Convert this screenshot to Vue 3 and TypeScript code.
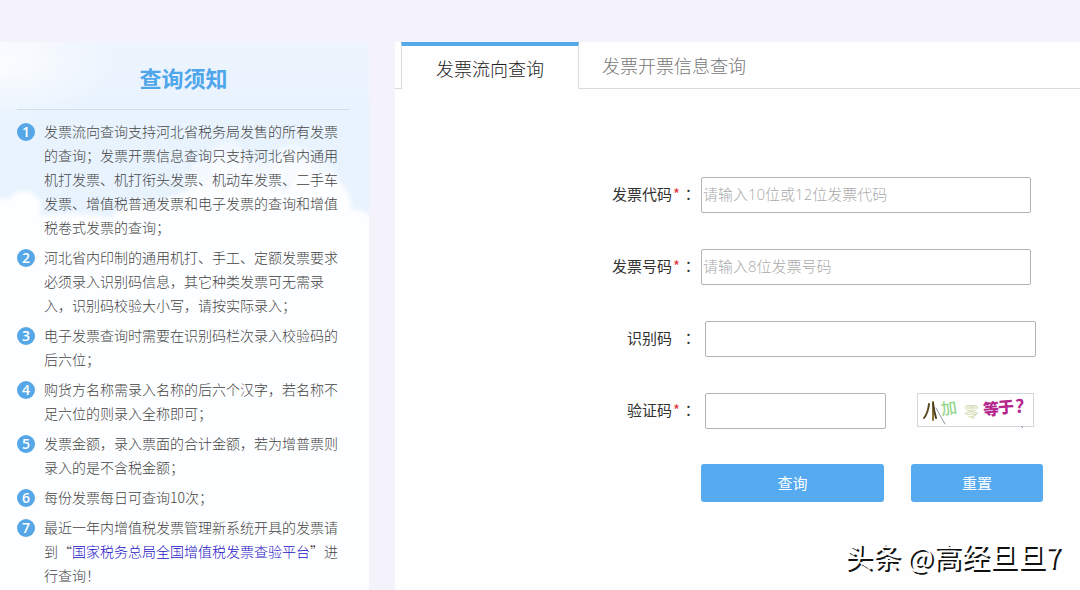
<script setup lang="ts">
import { ref } from 'vue'

interface Notice {
  before: string
  link?: string
  after?: string
}

const notices: Notice[] = [
  { before: '发票流向查询支持河北省税务局发售的所有发票的查询；发票开票信息查询只支持河北省内通用机打发票、机打衔头发票、机动车发票、二手车发票、增值税普通发票和电子发票的查询和增值税卷式发票的查询；' },
  { before: '河北省内印制的通用机打、手工、定额发票要求必须录入识别码信息，其它种类发票可无需录入，识别码校验大小写，请按实际录入；' },
  { before: '电子发票查询时需要在识别码栏次录入校验码的后六位；' },
  { before: '购货方名称需录入名称的后六个汉字，若名称不足六位的则录入全称即可；' },
  { before: '发票金额，录入票面的合计金额，若为增普票则录入的是不含税金额；' },
  { before: '每份发票每日可查询10次；' },
  { before: '最近一年内增值税发票管理新系统开具的发票请到“', link: '国家税务总局全国增值税发票查验平台', after: '”进行查询！' },
]

const tabs = ['发票流向查询', '发票开票信息查询']
const activeTab = ref(0)

const code = ref('')
const number = ref('')
const mark = ref('')
const captcha = ref('')

function reset() {
  code.value = ''
  number.value = ''
  mark.value = ''
  captcha.value = ''
}
</script>

<template>
  <div class="page">
    <aside class="notice">
      <svg class="clouds" viewBox="0 0 369 548" preserveAspectRatio="none" aria-hidden="true">
        <defs>
          <linearGradient id="sky" x1="0" y1="0" x2="0" y2="1">
            <stop offset="0" stop-color="#edf4fe" />
            <stop offset="0.15" stop-color="#e8f3fe" />
            <stop offset="1" stop-color="#e8f2fe" />
          </linearGradient>
          <linearGradient id="haze" x1="0" y1="0" x2="0" y2="1">
            <stop offset="0" stop-color="#fff" stop-opacity="0.35" />
            <stop offset="0.6" stop-color="#fff" stop-opacity="0.7" />
          </linearGradient>
          <radialGradient id="glow">
            <stop offset="0" stop-color="#fff" stop-opacity="0.8" />
            <stop offset="1" stop-color="#fff" stop-opacity="0" />
          </radialGradient>
          <filter id="soft"><feGaussianBlur stdDeviation="2" /></filter>
        </defs>
        <rect width="369" height="548" fill="url(#sky)" />
        <ellipse cx="0" cy="20" rx="120" ry="60" fill="url(#glow)" />
        <g fill="url(#haze)" filter="url(#soft)">
          <circle cx="228" cy="118" r="18" />
          <circle cx="208" cy="140" r="22" />
          <circle cx="256" cy="146" r="28" />
          <circle cx="292" cy="122" r="20" />
          <circle cx="316" cy="140" r="22" />
        </g>
        <g fill="#fdfeff" filter="url(#soft)">
          <circle cx="24" cy="166" r="17" />
          <ellipse cx="2" cy="172" rx="20" ry="16" />
          <ellipse cx="152" cy="186" rx="44" ry="28" />
          <ellipse cx="230" cy="178" rx="80" ry="34" />
          <circle cx="316" cy="168" r="36" />
          <circle cx="356" cy="186" r="18" />
          <ellipse cx="70" cy="196" rx="70" ry="24" />
          <rect x="-10" y="178" width="390" height="390" />
        </g>
      </svg>
      <div class="notice-body">
        <h2>查询须知</h2>
        <ol>
          <li v-for="(item, i) in notices" :key="i">
            <span class="num">{{ i + 1 }}</span>
            <p>{{ item.before }}<a v-if="item.link" href="#">{{ item.link }}</a>{{ item.after }}</p>
          </li>
        </ol>
      </div>
    </aside>

    <main class="panel">
      <nav class="tabs" role="tablist">
        <button
          v-for="(tab, i) in tabs"
          :key="tab"
          type="button"
          role="tab"
          class="tab"
          :class="{ active: activeTab === i }"
          :aria-selected="activeTab === i"
          @click="activeTab = i"
        >{{ tab }}</button>
      </nav>

      <form @submit.prevent @reset.prevent="reset">
        <div class="row short">
          <label for="code">发票代码<span class="star">*</span><span class="colon">：</span></label>
          <input id="code" v-model="code" type="text" placeholder="请输入10位或12位发票代码" />
        </div>
        <div class="row short">
          <label for="number">发票号码<span class="star">*</span><span class="colon">：</span></label>
          <input id="number" v-model="number" type="text" placeholder="请输入8位发票号码" />
        </div>
        <div class="row">
          <label for="mark">识别码<span class="star"></span><span class="colon">：</span></label>
          <input id="mark" v-model="mark" type="text" />
        </div>
        <div class="row">
          <label for="captcha">验证码<span class="star">*</span><span class="colon">：</span></label>
          <input id="captcha" v-model="captcha" type="text" />
          <svg class="captcha" viewBox="0 0 117 34" role="img" aria-label="验证码图片">
            <rect x="0.5" y="0.5" width="116" height="33" fill="#fff" stroke="#d3d7da" />
            <g fill="none" stroke-linecap="round">
              <path d="M12 11 Q11 20 7 25" stroke="#5a4a20" stroke-width="2" />
              <path d="M16 9 L16 27" stroke="#8a7434" stroke-width="2" />
              <path d="M16 10 Q17 18 19 25" stroke="#4c3d1c" stroke-width="2" />
              <path d="M19 15 L28 31" stroke="#8d93a8" stroke-width="1" />
            </g>
            <text x="24" y="21" font-size="16" font-weight="500" fill="#93d68d" transform="rotate(-8 31 16)">加</text>
            <text x="47" y="24" font-size="15" font-weight="500" fill="#dcdfbd">零</text>
            <text x="66" y="22" font-size="16" font-weight="900" fill="#b5278d" transform="rotate(-4 74 16)">等</text>
            <text x="81" y="20" font-size="16" font-weight="900" fill="#b5278d" transform="rotate(-4 89 14)">于</text>
            <text x="98" y="20" font-size="18" font-weight="700" fill="#b5278d">?</text>
            <path d="M104 33 l2 2" stroke="#b583b5" />
          </svg>
        </div>
        <div class="actions">
          <button type="submit" class="query">查询</button>
          <button type="reset" class="reset">重置</button>
        </div>
      </form>
    </main>

    <div class="watermark">头条 @高经旦旦7</div>
  </div>
</template>

<style>
body {
  margin: 0;
  background: #f4f3fb;
}
</style>

<style scoped>
.page {
  position: relative;
  display: flex;
  gap: 26px;
  box-sizing: border-box;
  height: 100vh;
  padding-top: 42px;
  overflow: hidden;
  font-family: "Noto Sans CJK SC", sans-serif;
  font-weight: 300;
  color: #333;
}
.notice {
  position: relative;
  flex: 0 0 369px;
  border-radius: 0 8px 0 0;
  overflow: hidden;
}
.clouds {
  position: absolute;
  inset: 0;
  width: 100%;
  height: 100%;
}
.notice-body {
  position: relative;
  padding: 19px 19px 0 17px;
}
h2 {
  margin: 0 0 9px;
  padding-bottom: 16px;
  border-bottom: 1px solid #cfdcec;
  font-size: 22px;
  line-height: 32px;
  font-weight: 700;
  text-align: center;
  color: #4fa6ea;
}
ol {
  display: flex;
  flex-direction: column;
  gap: 6px;
  margin: 0;
  padding: 0;
  list-style: none;
}
li {
  display: flex;
  align-items: flex-start;
  gap: 9px;
}
.num {
  flex: none;
  width: 18px;
  height: 18px;
  margin-top: 4px;
  border-radius: 50%;
  background: #55a7e8;
  color: #fff;
  font-family: "Open Sans", sans-serif;
  font-size: 14px;
  line-height: 18px;
  font-weight: 600;
  text-align: center;
}
li p {
  flex: none;
  width: 21em;
  margin: 0;
  font-size: 14px;
  line-height: 24px;
  color: #444;
}
a {
  color: #1d12c4;
  text-decoration: none;
}
.panel {
  flex: 1;
  min-width: 0;
  background: #fefefe;
}
.tabs {
  display: flex;
  height: 47px;
  padding-left: 6px;
  background: linear-gradient(#d9dcde, #d9dcde) bottom / 100% 1px no-repeat;
}
.tab {
  padding: 0 23px;
  border: 0;
  background: none;
  font: inherit;
  font-size: 18px;
  line-height: 47px;
  color: #777;
}
.tab.active {
  padding: 2px 34px 0;
  border: 1px solid #d9dcde;
  border-top: 4px solid #55a9e6;
  border-bottom: 0;
  background: #fefefe;
  line-height: 41px;
  color: #222;
}
form {
  display: flex;
  flex-direction: column;
  gap: 36px;
  padding: 88px 44px 0 200px;
}
.row {
  display: flex;
  align-items: center;
  gap: 8px;
}
.row.short {
  gap: 4px;
  margin-right: 5px;
}
label {
  display: flex;
  flex: 0 0 102px;
  justify-content: flex-end;
  padding-bottom: 2px;
  box-sizing: border-box;
  font-size: 15px;
  line-height: 24px;
  font-weight: 400;
  color: #333;
}
.star {
  width: 9px;
  color: #e0343a;
  text-align: center;
}
.colon {
  width: 16px;
  font-family: "Noto Sans CJK TC", sans-serif;
}
input {
  flex: 1;
  min-width: 0;
  box-sizing: border-box;
  height: 36px;
  padding: 0 1px 2px;
  border: 1px solid #b4b4b4;
  border-radius: 2px;
  background: #fff;
  font-family: "Open Sans", "Noto Sans CJK SC", sans-serif;
  font-size: 15px;
  font-weight: 300;
  color: #333;
}
input::placeholder {
  color: #aaa;
  opacity: 1;
}
.captcha {
  flex: 0 0 117px;
  height: 34px;
  margin: 0 2px 2px 23px;
  overflow: visible;
}
.actions {
  display: flex;
  gap: 27px;
  margin: -1px -7px 0 106px;
}
.actions button {
  height: 38px;
  padding: 0 0 2px;
  border: 0;
  border-radius: 3px;
  background: #55aaf0;
  font: inherit;
  font-size: 15px;
  font-weight: 400;
  color: #fff;
}
.actions .query {
  flex: 183;
}
.actions .reset {
  flex: 132;
}
.watermark {
  position: absolute;
  right: 19px;
  bottom: 14px;
  font-size: 28px;
  line-height: 40px;
  font-weight: 400;
  color: #fff;
  text-shadow: 2px 2px 0 #111;
}
</style>
